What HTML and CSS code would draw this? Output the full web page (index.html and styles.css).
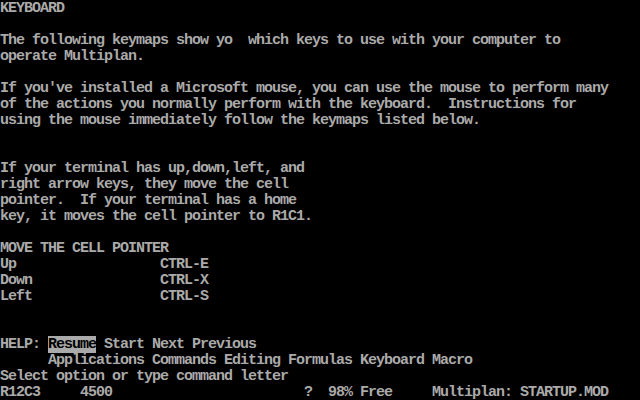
FILE: index.html
```html
<!DOCTYPE html>
<html lang="en">
<head>
    <meta charset="UTF-8">
    <title>Multiplan - Help</title>
    <link rel="stylesheet" href="styles.css">
</head>
<body>
    <div class="screen">
<pre class="line">KEYBOARD</pre>
<pre class="line"> </pre>
<pre class="line">The following keymaps show yo  which keys to use with your computer to</pre>
<pre class="line">operate Multiplan.</pre>
<pre class="line"> </pre>
<pre class="line">If you've installed a Microsoft mouse, you can use the mouse to perform many</pre>
<pre class="line">of the actions you normally perform with the keyboard.  Instructions for</pre>
<pre class="line">using the mouse immediately follow the keymaps listed below.</pre>
<pre class="line"> </pre>
<pre class="line"> </pre>
<pre class="line">If your terminal has up,down,left, and</pre>
<pre class="line">right arrow keys, they move the cell</pre>
<pre class="line">pointer.  If your terminal has a home</pre>
<pre class="line">key, it moves the cell pointer to R1C1.</pre>
<pre class="line"> </pre>
<pre class="line">MOVE THE CELL POINTER</pre>
<pre class="line">Up                  CTRL-E</pre>
<pre class="line">Down                CTRL-X</pre>
<pre class="line">Left                CTRL-S</pre>
<pre class="line"> </pre>
<pre class="line"> </pre>
<pre class="line">HELP: <span class="selected">Resume</span> Start Next Previous</pre>
<pre class="line">      Applications Commands Editing Formulas Keyboard Macro</pre>
<pre class="line">Select option or type command letter</pre>
<pre class="line">R12C3     4500                        ?  98% Free     Multiplan: STARTUP.MOD</pre>
    </div>
</body>
</html>
```

FILE: styles.css
```css
html, body {
    margin: 0;
    padding: 0;
    background-color: #000;
}

.screen {
    width: 640px;
    height: 400px;
    overflow: hidden;
    background-color: #000;
    color: #aaaaaa;
    font-family: "Liberation Mono", "DejaVu Sans Mono", monospace;
    font-size: 15px;
    font-weight: bold;
    letter-spacing: -1px;
}

.line {
    margin: 0;
    height: 16px;
    line-height: 16px;
    font: inherit;
    white-space: pre;
}

.selected {
    background-color: #aaaaaa;
    color: #000;
}
```
